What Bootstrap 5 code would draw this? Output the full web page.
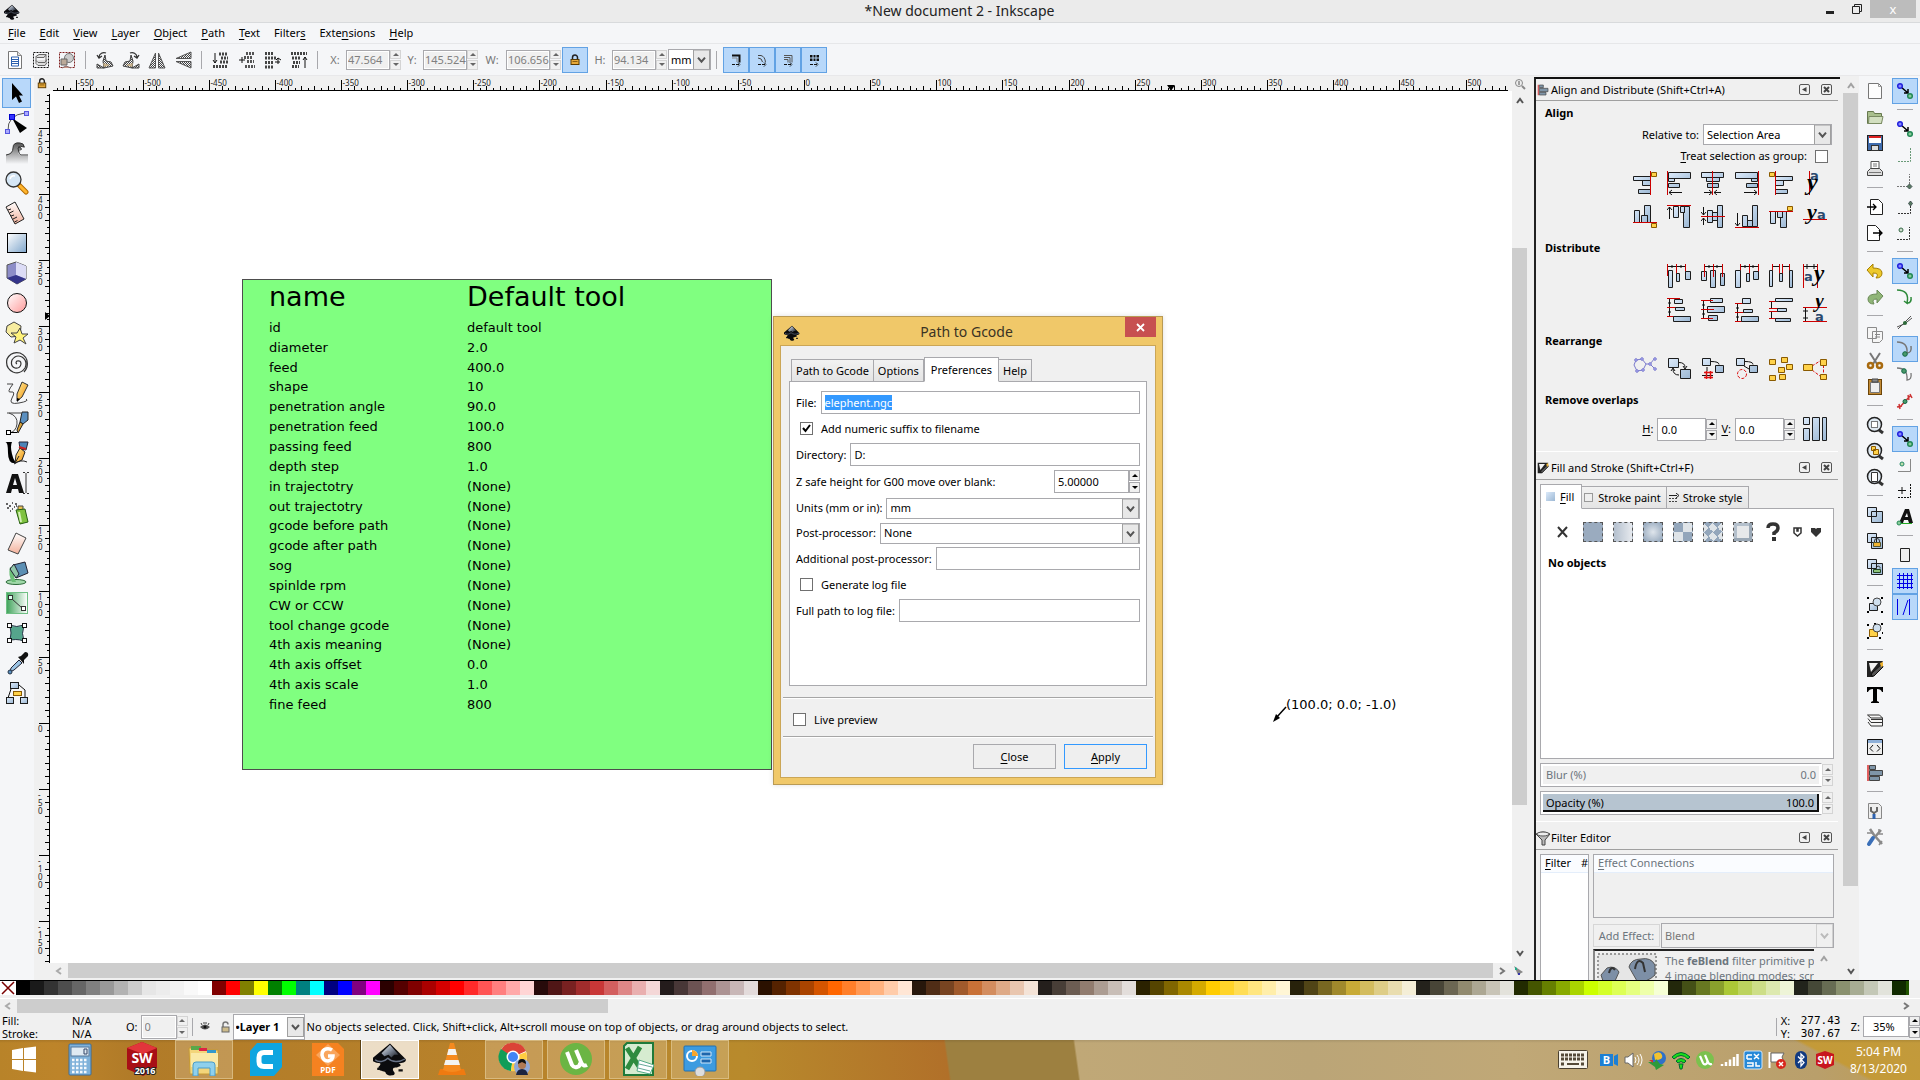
<!DOCTYPE html>
<html lang="en">
<head>
<meta charset="utf-8">
<meta name="viewport" content="width=device-width, initial-scale=1">
<title>*New document 2 - Inkscape</title>
<link href="https://cdn.jsdelivr.net/npm/bootstrap@5.3.0/dist/css/bootstrap.min.css" rel="stylesheet">
<style>
:root{--chrome:#f0f0f0;--bar:#f5f6f8;--edge:#a9a9ad;--thumb:#cdcdcd;--hot:#b8d8fa;--hotedge:#62a2e4}
body{font:11px/16px "Noto Sans","Open Sans",sans-serif;color:#000;background:var(--chrome);overflow:hidden}
body>*{flex-shrink:0}
button,input,select{font:inherit;color:inherit}
button{background:none;border:0;padding:0}
svg{display:block;flex:none}
u{text-underline-offset:2px}
.i24{width:24px;height:24px}
.i16{width:16px;height:16px}
.titlebar{height:23px;background:#ebebeb;border-bottom:1px solid #d8dadc;font-size:14px;line-height:22px;color:#222}
.titlebar .doctitle{padding-left:81px}
.winbtn{width:26px;height:18px}
.winclose{width:46px;height:18px;background:#bcbcbc;color:#fff;font-size:13px;line-height:17px}
.menus{height:21px;background:var(--bar);border-bottom:1px solid #e6e7e9;gap:14px}
.menus a{color:#000;text-decoration:none}
.cmds{height:32px;background:var(--bar);border-bottom:1px solid #e8e8ea;color:#777;padding-left:2px}
.ico{width:26px;height:26px;display:flex;align-items:center;justify-content:center;flex:none}
.hot{background:var(--hot);border:1px solid var(--hotedge)}
.vsep{width:1px;height:18px;background:#a8a8ac;margin:0 6px 0 5px}
.hsep{height:1px;width:16px;background:#a8a8ac;margin:5px auto 6px}
.fld{height:20px;border:1px solid var(--edge);background:#fff;padding:0 3px;border-radius:0;min-width:0;outline:0}
.fld:disabled{background:#f0f0f0;color:#808080;box-shadow:inset 0 0 0 1px #fff}
.spin{width:11px;display:flex;flex-direction:column;gap:1px}
.spin button{flex:1;border:1px solid #a9a9ad;display:flex;align-items:center;justify-content:center;background:#f0f0f0}
.spin button::after{content:"";border:3px solid transparent;border-top:0;border-bottom:3px solid #000}
.spin button:last-child::after{border-bottom:0;border-top:3px solid #000}
.spin.off button{border-color:#d4d4d4}
.spin.off button::after{border-bottom-color:#666}
.spin.off button:last-child::after{border-top-color:#666}
.combo{appearance:none;border:1px solid var(--edge);border-radius:0;padding:0 18px 0 3px;height:21px;outline:0;
 background:#fff url("data:image/svg+xml,%3Csvg xmlns='http://www.w3.org/2000/svg' width='17' height='20'%3E%3Crect x='.5' y='.5' width='16' height='19' fill='%23e8e8e8' stroke='%23a0a0a0'/%3E%3Cpath d='M5 8l3.500 4L12 8' fill='none' stroke='%23555' stroke-width='2'/%3E%3C/svg%3E") right center no-repeat}
.combo:disabled{color:#777;opacity:1;background-color:#f0f0f0;
 background-image:url("data:image/svg+xml,%3Csvg xmlns='http://www.w3.org/2000/svg' width='17' height='24'%3E%3Crect x='.5' y='.5' width='16' height='23' fill='%23f0f0f0' stroke='%23d0d0d0'/%3E%3Cpath d='M5 10l3.500 4L12 10' fill='none' stroke='%23bbb' stroke-width='2'/%3E%3C/svg%3E")}
.tick{appearance:none;width:13px;height:13px;margin:0;border:1px solid #707070;background:#fff;flex:none}
.tick:checked{background:#fff url("data:image/svg+xml,%3Csvg xmlns='http://www.w3.org/2000/svg' width='11' height='11'%3E%3Cpath d='M2 5l2.500 3L9 2' fill='none' stroke='%23000' stroke-width='2'/%3E%3C/svg%3E")}
.coords label{width:22px;text-align:center}
.coords .wlab{width:28px}
.coords .hlab{width:24px}
.coords .fld{width:44px;padding:0 0 0 1px}
.coords .spin{height:20px}
.coords .ico{margin-left:1px}
.coords .combo{width:43px;margin-left:1px;padding:0 17px 0 2px}
.tools{width:34px;background:var(--bar);padding:2px 3px 0 2px}
.tools .ico{width:29px;height:30px}
.rulerh{height:15px}
.rulerv{width:16px}
.rulerh svg,.rulerv svg{width:100%;height:100%}
.rulerh text,.rulerv text{font-size:8px;fill:#222}
.page-area{background:#fff;overflow:hidden}
.vbar{width:15px}
.hbar{height:15px}
.sidegap{margin-right:3px}
.thumb{background:var(--thumb)}
.toolcard{position:absolute;left:192px;top:188px;width:530px;height:491px;background:#80ff80;border:1px solid #4d4d4d;padding:0 26px;font:13px/18px "DejaVu Sans",sans-serif}
.toolcard table{width:100%;height:397px;color:#000}
.toolcard td,.toolcard th{padding:0;font-weight:400;vertical-align:middle}
.toolcard th{width:198px}
.cardhead{font-size:27px;line-height:34px;height:38px}
.cardhead span:first-child{width:198px}
.arrowmark{position:absolute;left:1222px;top:611px}
.orig{position:absolute;left:1236px;top:605px;font:13px/18px "DejaVu Sans",sans-serif}
.dialogwin{position:absolute;left:723px;top:225px;width:390px;background:#f0c869;border:1px solid #b99a54;padding:0 6px 6px;box-shadow:0 0 5px #0002}
.dlgtitle{height:28px;font-size:14px;color:#3a3324}
.dlgclose{width:31px;height:20px;background:#c75050}
.dlgbody{background:var(--chrome);border:1px solid #cba656;padding:11px 8px 8px}
.tabrow{display:flex;align-items:flex-end;position:relative;z-index:1;margin-bottom:-1px}
.tabrow button{height:23px;border:1px solid var(--edge);background:linear-gradient(#f2f2f2,#e4e4e4);white-space:nowrap}
.tabrow button+button{border-left:0}
.tabrow .on{height:25px;background:#fff;border-bottom-color:#fff;border-left:1px solid var(--edge)}
.dlgbody .tabrow{padding-left:2px}
.dlgbody .tabrow button{padding:0 4px}
.dlgbody .tabrow .on{padding:0 6px}
.pane{background:#fff;border:1px solid var(--edge)}
.dlgpane{height:305px;padding:9px 6px 0}
.frow{display:flex;align-items:center;gap:4px;height:23px;margin-bottom:3px;white-space:nowrap}
.frow .fld{height:23px}
.frow .zin{width:75px}
.zrow{height:25px}
.crow{height:22px}
.rule{height:2px;background:#a6a6a6;border-bottom:1px solid #fff;margin:0 -6px}
.dlgpane+.rule{margin-top:11px}
.livep{height:37px;gap:8px;padding:4px 0 0 4px}
.dlgbtns{padding-top:6px}
.pushbtn{width:83px;height:25px;border:1px solid var(--edge);background:#efefef}
.pushbtn.main{border-color:#3399ff}
::selection{background:#39f;color:#fff}
.dockcol{flex:0 0 306px;border-left:2px solid #222;border-top:2px solid #111;overflow:hidden;margin-top:1px}
.dockhead{height:22px;border-bottom:1px solid #a0a0a0;margin-right:2px}
.dockhead .i16{margin-left:-1px}
.dockhead.later{height:28px;padding-top:4px}
.dockhead button{width:22px;display:flex;justify-content:center}
.dsec{border-bottom:1px solid #fff;margin-right:2px}
.dsec h6{font-size:11px;line-height:18px;margin:0;font-weight:700}
.igrid{display:grid;grid-template-columns:repeat(6,24px);gap:10px;justify-content:end;padding-right:5px}
.alignsec{padding:3px 6px 0 9px;height:351px}
.selrow{height:21px;margin-top:2px}
.selrow select{width:129px}
.treat{height:22px;padding-right:4px;margin-bottom:4px}
.alignsec .igrid+h6{padding:10px 0 7px}
.ovrow{padding-right:5px;margin-top:1px}
.ovrow .fld{width:49px;height:23px}
.ovrow .spin{height:21px}
.ovrow label{padding:0 4px}
.fillsec{padding:4px 4px 0 4px;height:342px}
.fillsec .tabrow button{padding:0 5px 0 2px}
.fillsec .tabrow .on{padding:0 7px 0 5px}
.fillpane{height:251px;position:relative;padding:13px 7px;margin-bottom:4px}
.fillpane h6{padding-top:12px}
.paints{gap:10px;padding-left:5px}
.paint{width:20px;height:20px;border:1px dashed #555}
.hearts{position:absolute;right:10px;top:17px}
.srow{height:24px;margin-bottom:4px}
.srow .spin{height:22px;margin:1px 1px 0 0}
.slider-f{flex:1;height:24px;border:1px solid var(--edge);border-right-color:#fff;padding:2px;background:#fff}
.slider-f>div{flex:1;padding:0 3px;line-height:17px}
.opac{background:#b6c4d0;border-right:2px solid #111;border-bottom:2px solid #111}
.blurry{background:#f0f0f0}
.listhd{height:18px;background:#fafcff;border-bottom:1px solid #e4eefb;white-space:nowrap}
.filt{padding:4px 4px 0 4px;gap:4px}
.flist{width:49px;height:200px}
.fright{width:241px}
.efx{height:64px;background:#f0f0f0}
.addrow{margin:5px 0 1px;height:25px;gap:1px}
.addrow button{border:1px solid #d6d6d6;width:67px;height:23px}
.addrow .combo{height:25px}
.desc{border-top:2px solid #222;border-left:2px solid #888;width:222px;overflow:hidden;padding:2px;line-height:15px}
.dockbar{margin:0 1px 0 3px}
.dockbar svg:first-child{margin:4px 0 1px}
.dockbar svg:last-child{margin-bottom:3px}
.sidebars{background:var(--bar)}
.cmdcol{width:31px;padding-top:2px}
.snapcol{width:30px;padding-top:2px}
.cmdcol .ico,.snapcol .ico{margin:0 auto}
.swatches{height:15px;border-top:1px solid #000;overflow:hidden;max-width:1909px}
.swatches>*{height:14px;width:14px;flex:none;padding:0}
.swatches>:first-child{width:16px;background:#fff}
.palbar{margin-top:3px;border-top:1px solid #fff}
.palbar svg:first-child{margin:0 3px 0 2px}
.palbar .thumb{width:591px;height:14px}
.status{height:27px;white-space:nowrap}
.twoline{line-height:13px}
.fs{width:70px;padding-left:2px}
.na{width:56px;padding-left:2px}
.opin{width:36px;height:24px;margin-left:3px}
.status .spin{height:22px}
.lk{margin-left:4px}
.layersel{width:72px;height:26px;padding-left:2px}
.msg{padding-left:2px}
.xy{width:20px}
.num{width:50px;font-family:"DejaVu Sans Mono","Liberation Mono",monospace}
.zmin{width:46px;height:21px;margin-left:3px;padding-left:9px}
.taskbar{height:40px;background:linear-gradient(#0000001a,#0000 3px),linear-gradient(28deg,#0000 62%,#c49a38 64%,#c29a3c) right/260px 100% no-repeat,linear-gradient(82deg,#b88329 0,#bd842a 60px,#b17b28 130px,#b8822b 500px,#b88a2c 740px,#b17029 940px,#9d8040 942px,#9d8040 1068px,#c0a877 1070px,#bba577 1300px,#c0a877 1500px,#b99f6b 1800px,#bf9c4f)}
.startbtn{width:49px}
.tk{width:62px;height:40px;display:flex;align-items:center;justify-content:center;padding-bottom:2px}
.tk>span{width:58px;height:39px;display:flex;align-items:center;justify-content:center}
.tk svg{width:34px;height:34px}
.open>span{background:#fff3;border:1px solid #e3c993aa}
.active>span{background:#fffb;border-color:#fff;box-shadow:-1px 0 #5a4012}
.tray svg{width:20px;height:20px}
.tray button{width:24px;display:flex;justify-content:center}
.tray .kb{width:36px;margin-right:6px}
.tray .kb svg{width:30px}
.clock{width:83px;color:#fff;text-align:center;line-height:17px;font-size:12px}
.ab{fill:url(#gblue);stroke:#1c1c1c}
.rl{stroke:#cc0000;fill:none}
.bl{stroke:#111;fill:none}
.yb{fill:#ffd24a;stroke:#8a5a00}
.gr{stroke:#888;fill:none}
</style>
<script src="https://cdn.jsdelivr.net/npm/bootstrap@5.3.0/dist/js/bootstrap.bundle.min.js"></script>
</head>
<body class="vh-100 d-flex flex-column">

<svg width="0" height="0" class="position-absolute" aria-hidden="true">
<defs>
<linearGradient id="gblue" x2="1" y2="1"><stop stop-color="#dceafa"/><stop offset="1" stop-color="#9cb8d4"/></linearGradient>
<linearGradient id="gwb" x2="1" y2="1"><stop stop-color="#fff"/><stop offset="1" stop-color="#7fa6cc"/></linearGradient>
<linearGradient id="gpink" x2="1" y2="1"><stop stop-color="#fff"/><stop offset="1" stop-color="#ff9a9a"/></linearGradient>
<linearGradient id="gskin" y2="1" x2="0"><stop stop-color="#fff"/><stop offset="1" stop-color="#f3b09a"/></linearGradient>
<linearGradient id="ggray" x2="0" y2="1"><stop stop-color="#555"/><stop offset="1" stop-color="#f5f6f8"/></linearGradient>
<linearGradient id="ggreen" x2="1"><stop stop-color="#3fa35a"/><stop offset="1" stop-color="#fff"/></linearGradient>
<linearGradient id="gink" x2="1" y2="1"><stop stop-color="#f4f6fb"/><stop offset=".5" stop-color="#7d8797"/><stop offset="1" stop-color="#10131a"/></linearGradient>
<linearGradient id="gor" x2="1" y2="1"><stop stop-color="#fff0a0"/><stop offset="1" stop-color="#f08a00"/></linearGradient>
<pattern id="dith" width="2" height="2" patternUnits="userSpaceOnUse"><path d="M0 0h1v1H0zM1 1h1v1H1z" fill="#444"/></pattern>

<symbol id="ink" viewBox="0 0 24 24"><path d="M12 1L23 12c1 2-2 3-5 3 2 1 2 2 0 2.500-2 1-3 0-4 1.500 0 2 2 2 1 4-1 1-5 1-6-1 0-2-4-1-5-3s2-2 1-4c-2 0-6-1-6-3z" fill="#0b0b0e"/><path d="M12 2L6 8l2 2 3-1 2 2 2-2 3 0z" fill="url(#gink)"/><path d="M1.500 12.500c3 2.500 7 1 9-1 3 3 8 3 12 .5" fill="none" stroke="#6a7488"/><path d="M3 19h2M18 20h3" stroke="#111" stroke-width="1.500"/></symbol>
<symbol id="lock" viewBox="0 0 16 16"><path d="M5.500 8V5.500a2.500 2.500 0 015 0V8" fill="none" stroke="#222" stroke-width="1.500"/><rect x="4" y="7.500" width="8" height="5" fill="#e6a93a" stroke="#5a3a00"/><path d="M5.500 9.500h5" stroke="#8a5c10"/></symbol>

<symbol id="c-doc" viewBox="0 0 24 24"><path d="M5.500 3.500h9l4 4v13h-13z" fill="#fff" stroke="#777"/><path d="M14.500 3.500v4h4" fill="#ddd" stroke="#888"/><path d="M8.500 9v9h7v-9zM8 11.500h8M8 13.500h8M8 15.500h8" fill="none" stroke="#2a5fae"/></symbol>
<symbol id="c-layers" viewBox="0 0 24 24"><rect x="4.500" y="4.500" width="15" height="15" fill="none" stroke="#111" stroke-dasharray="2 1"/><path d="M7 8.500l3-2h7l-2 3H8zM7 12.500l2 2h7l2-3M7 15.500l2 2h7l2-3M7 8.500v7M17 6.500v8" fill="#ddd" stroke="#666"/></symbol>
<symbol id="c-desel" viewBox="0 0 24 24"><rect x="4.500" y="4.500" width="15" height="15" fill="none" stroke="#802020" stroke-dasharray="2 1"/><circle cx="14" cy="10" r="4.500" fill="#ccc" stroke="#777"/><path d="M6 11h6v6H6z" fill="#ba9" stroke="#666"/><path d="M7 20l4-2 5 2" fill="#c98" stroke="#866"/></symbol>
<symbol id="c-rotl" viewBox="0 0 24 24"><path d="M4 16l7 4h-7zM11 20l9-2-2-4-5-1-1-6-2 6z" fill="url(#dith)" stroke="#444"/><path d="M13 5a5 5 0 00-7 4M4 7l2 3 3-2" fill="none" stroke="#333" stroke-width="1.300"/><path d="M10 15l7 2-6 2z" fill="#c9b28a"/></symbol>
<symbol id="c-fliph" viewBox="0 0 24 24"><path d="M10.500 5v15H4zM13.500 5v15H20z" fill="url(#dith)" stroke="#555"/></symbol>
<symbol id="c-bottom" viewBox="0 0 24 24"><path d="M6 5v10m-2-3l2 3 2-3" class="bl"/><path d="M10 6h9M12 10h7M11 14h8M4 18.500h15" stroke="#444" stroke-width="3" stroke-dasharray="2 1"/></symbol>
<symbol id="c-lower" viewBox="0 0 24 24"><path d="M11 5.500h9M9 9.500h8M12 13.500h7M10 18.500h10" stroke="#555" stroke-width="3" stroke-dasharray="2 1"/><path d="M4 12h6M7 9v6" class="bl"/></symbol>
<symbol id="c-raise" viewBox="0 0 24 24"><path d="M4 5.500h8M4 10h11M4 14.500h8M4 19h9" stroke="#444" stroke-width="3" stroke-dasharray="2 1"/><path d="M17 16v-6m-2 2l2-2 3 2M14 14h5" class="bl"/></symbol>
<symbol id="c-top" viewBox="0 0 24 24"><path d="M4 5.500h16M5 10h8M6 14.500h7M5 18.500h7" stroke="#444" stroke-width="3" stroke-dasharray="2 1"/><path d="M18 20V9m-2 3l2-3 2 3" class="bl"/></symbol>
<symbol id="c-aff1" viewBox="0 0 24 24"><path d="M8 7.500h7.500v7" fill="none" stroke="#111" stroke-width="2"/><path d="M8 10h5v4" class="gr"/><path d="M8 16.500h8m-2-2l2 2-2 2" class="bl" stroke-dasharray="3 1"/></symbol>
<symbol id="c-aff2" viewBox="0 0 24 24"><path d="M8 7.500h3q4 1 4.500 7M8 10q4 0 4.500 4" fill="none" stroke="#444"/><path d="M8 16.500h8m-2-2l2 2-2 2" class="bl" stroke-dasharray="3 1"/></symbol>
<symbol id="c-aff3" viewBox="0 0 24 24"><path d="M8 7.500h8v7M8 9.500h6v5M8 11.500h4v3" fill="none" stroke="#555"/><path d="M8 16.500h8m-2-2l2 2-2 2" class="bl" stroke-dasharray="3 1"/></symbol>
<symbol id="c-aff4" viewBox="0 0 24 24"><rect x="8" y="7" width="9" height="6" fill="#111"/><path d="M8 10h9M11 7v6M14 7v6" stroke="#b8d8fa"/><path d="M8 16.500h8m-2-2l2 2-2 2" class="bl" stroke-dasharray="3 1"/></symbol>

<symbol id="t-sel" viewBox="0 0 24 24"><path d="M7 2v17l4-3.500 3 6.500 3-1.500-3-6h4z" fill="#000"/></symbol>
<symbol id="t-node" viewBox="0 0 24 24"><path d="M3 20Q2 4 20 2" fill="none" stroke="#555"/><path d="M7 7l15 10-7 5z" fill="#000"/><rect x="4.500" y="3.500" width="5" height="5" fill="#33f" stroke="#00c"/><rect x="19.500" y=".5" width="4" height="4" fill="#aaf" stroke="#55d"/><rect x=".5" y="18.500" width="4" height="4" fill="#aaf" stroke="#55d"/></symbol>
<symbol id="t-tweak" viewBox="0 0 24 24"><path d="M1 14q7-1 7-7t7-5q5 1 5 5-3-3-5-1 3 2 0 4-4 2 1 5h7v8H1z" fill="url(#ggray)"/><path d="M1 14q7-1 7-7t7-5q4 0 4 4-4-2-6 1 1 7 3 7h7M13 6q4 0 3 3" fill="none" stroke="#333"/></symbol>
<symbol id="t-zoom" viewBox="0 0 24 24"><path d="M14 14l7 7" stroke="#b36b00" stroke-width="5" stroke-linecap="round"/><path d="M15 15l6 6" stroke="#ffb52e" stroke-width="3" stroke-linecap="round"/><circle cx="8.500" cy="8.500" r="7.500" fill="#d5e6f5" stroke="#333" stroke-width="1.300"/><path d="M5 8q1-4 5-3" stroke="#fff" stroke-width="1.500" fill="none"/></symbol>
<symbol id="t-meas" viewBox="0 0 24 24"><path d="M1 6l9-5 9 17-9 5z" fill="url(#gskin)" stroke="#222"/><path d="M3 9l3-1M4.500 12l4-2M6 15l3-1M8 18l4-2M9.500 21l3-1.500" stroke="#222"/></symbol>
<symbol id="t-rect" viewBox="0 0 24 24"><rect x="2.500" y="2.500" width="19" height="19" fill="url(#gwb)" stroke="#000"/></symbol>
<symbol id="t-box" viewBox="0 0 24 24"><path d="M11 1l10 4v13l-9 5-10-6V4z" fill="#8d8dc8" stroke="#555"/><path d="M11 1l10 4v13l-10-4z" fill="#dcdcf6"/><path d="M2 17l9-3 10 4-9 5z" fill="#34348a"/></symbol>
<symbol id="t-ell" viewBox="0 0 24 24"><circle cx="12" cy="12" r="9.500" fill="url(#gpink)" stroke="#111"/></symbol>
<symbol id="t-star" viewBox="0 0 24 24"><path d="M2 5l7-4 7 4-1 10-9 1-5-5z" fill="#f7eca0" stroke="#444"/><path d="M15 7l2 6h6l-5 4 3 6-6-4-6 3 2-6-5-4h6z" fill="#fff27a" stroke="#444"/></symbol>
<symbol id="t-spiral" viewBox="0 0 24 24"><path d="M12 13q-2-1 0-3 4-1 4 3-1 5-6 4-5-2-3-8 4-6 10-3 6 4 3 11-5 7-12 4Q0 17 2 8q4-8 13-6 9 4 7 14-1 3-3 5" fill="none" stroke="#333" stroke-width="1.200"/></symbol>
<symbol id="t-pencil" viewBox="0 0 24 24"><path d="M2 3h6q-7 9-2 8t1 6 7 5 7-4" fill="none" stroke="#444"/><path d="M12 20V13L17 1l6 3-6 12z" fill="url(#gor)" stroke="#333"/><path d="M12 21l0-4 3 1z" fill="#000"/></symbol>
<symbol id="t-pen" viewBox="0 0 24 24"><path d="M2 2h14M4 2q9 3 8 11t-8 9" fill="none" stroke="#444"/><path d="M17 1h6v8l-5 4-3-2z" fill="#5a8fc0" stroke="#222"/><path d="M15 11l3 2-5 9-1-3z" fill="#d6a13a" stroke="#222"/><rect x="1.500" y="19.500" width="4" height="4" fill="#fff" stroke="#000"/><path d="M6 21.500h6" stroke="#000"/></symbol>
<symbol id="t-call" viewBox="0 0 24 24"><path d="M0 1h7q-2 4 0 12t5 9q-9 2-9-10T0 1z" fill="#000"/><path d="M14 1l9 0-2 8-6-1z" fill="#4c84b8" stroke="#223"/><path d="M15 7l5 4-3 8-7 3 1-8z" fill="url(#gor)" stroke="#222"/><path d="M10 22l4-7M9 23q7-5 13-2" fill="none" stroke="#222"/><path d="M14 6l7 2" stroke="#c22" stroke-width="2"/></symbol>
<symbol id="t-text" viewBox="0 0 24 24"><path d="M1 22L7 3h6l6 19h-5l-1-4H7l-1 4zM8 14h4l-2-7z" fill="#111" fill-rule="evenodd"/><path d="M18 1.500h2m2 0h2M21 2v20M18 22.500h2m2 0h2" stroke="#333"/></symbol>
<symbol id="t-spray" viewBox="0 0 24 24"><path d="M1 3h2m1 2h2M7 2h1m2 1h2M2 7h2m3 1h1m3-3h1M9 6h1M5 10h1" stroke="#333" stroke-width="1.500"/><path d="M13 5h5v5h-5z" fill="#e8c050" stroke="#444"/><path d="M11 9l9-1 3 13-8 2z" fill="#7fc241" stroke="#255d10"/><path d="M14 11l2 10" stroke="#d6f2b8" stroke-width="2"/></symbol>
<symbol id="t-eras" viewBox="0 0 24 24"><path d="M11 2l10 5-8 16-10-4z" fill="url(#gskin)" stroke="#444"/></symbol>
<symbol id="t-bucket" viewBox="0 0 24 24"><ellipse cx="11" cy="21" rx="10" ry="2.500" fill="#9fd8a8" stroke="#2c6a3a"/><path d="M5 6q-2 8 2 15h4q-4-8 0-12z" fill="#6cbf78"/><path d="M8 4l12-3 3 11-12 5z" fill="#5c8fb4" stroke="#223"/><path d="M5 8l4-5 5 10-3 4z" fill="#8fc5a8" stroke="#223"/></symbol>
<symbol id="t-grad" viewBox="0 0 24 24"><rect x="1.500" y="1.500" width="21" height="21" fill="url(#ggreen)" stroke="#6fbf84"/><path d="M7 8l10 9" stroke="#333"/><rect x="3.500" y="4.500" width="4" height="4" fill="#dfe" stroke="#333"/><rect x="16.500" y="15.500" width="4" height="4" fill="#fff" stroke="#333"/></symbol>
<symbol id="t-mesh" viewBox="0 0 24 24"><path d="M4 4q8 3 15 0-3 9 0 16-9-3-15 0 4-8 0-16z" fill="#55a58c" stroke="#234"/><g fill="#fff" stroke="#111"><rect x="2.500" y="2.500" width="4" height="4"/><rect x="17.500" y="2.500" width="4" height="4"/><rect x="2.500" y="17.500" width="4" height="4"/><rect x="17.500" y="17.500" width="4" height="4"/></g></symbol>
<symbol id="t-drop" viewBox="0 0 24 24"><path d="M14 9L6 17l-1 4 4-2 8-7z" fill="#9cc4e4" stroke="#223"/><path d="M13 6l3-1 4-4q4 0 3 4l-4 4 0 4z" fill="#111"/><circle cx="5" cy="21" r="2" fill="#5a8fc0" stroke="#234"/></symbol>
<symbol id="t-conn" viewBox="0 0 24 24"><path d="M6 8L3 17M14 4l6 5v8" class="bl"/><rect x="5.500" y="1.500" width="8" height="6" class="ab"/><rect x="8.500" y="10.500" width="8" height="4" class="yb"/><rect x="1.500" y="16.500" width="7" height="6" class="ab"/><rect x="15.500" y="16.500" width="7" height="6" class="ab"/></symbol>

<symbol id="a1" viewBox="0 0 24 24"><path class="ab" d="M.5 5.500h17v4H.5zM9.500 9.500h8v5h-8zM5.500 18.500h12v4h-12z"/><path class="rl" d="M17.500 0v24"/><path class="yb" d="M18.500 1.500h5v4h-5z"/></symbol>
<symbol id="a2" viewBox="0 0 24 24"><path class="ab" d="M1.500 1.500h22v6h-22zM1.500 7.500h6v3h-6zM1.500 12.500h11v4h-11z"/><path class="rl" d="M.5 0v24"/><path class="bl" d="M2 21.500h13M5 19l-3 2.500 3 2.500"/></symbol>
<symbol id="a3" viewBox="0 0 24 24"><path class="ab" d="M.5 1.500h22v5H.5zM5.500 6.500h13v4h-13zM6.500 12.500h11v4h-11z"/><path class="bl" d="M3 21.500h7M8 19l3 2.500-3 2.500M20 21.500h-7M16 19l-3 2.500 3 2.500"/><path class="rl" d="M11.500 0v24"/></symbol>
<symbol id="a4" viewBox="0 0 24 24"><path class="ab" d="M.5 1.500h22v6H.5zM16.500 7.500h6v3h-6zM11.500 12.500h11v4h-11z"/><path class="rl" d="M23.500 0v24"/><path class="bl" d="M9 21.500h13M19 19l3 2.500-3 2.500"/></symbol>
<symbol id="a5" viewBox="0 0 24 24"><path class="ab" d="M6.500 5.500h17v4h-17zM6.500 9.500h8v5h-8zM6.500 18.500h12v4h-12z"/><path class="rl" d="M6.500 0v24"/><path class="yb" d="M.5 1.500h5v4h-5z"/></symbol>
<symbol id="a6" viewBox="0 0 24 24"><path class="rl" d="M6.500 0v24"/><text x="7" y="9" font-family="DejaVu Sans" font-weight="700" font-size="13" fill="#2b4a6f">a</text><text x="4" y="19" font-family="Liberation Serif" font-weight="700" font-style="italic" font-size="24">y</text></symbol>
<symbol id="a7" viewBox="0 0 24 24"><path class="ab" d="M1.500 5.500h5v12h-5zM8.500 10.500h6v7h-6zM11.500 .5h6v17h-3v-7h-3z"/><path class="rl" d="M0 17.500h24"/><path class="yb" d="M18.500 18.500h5v4h-5z"/></symbol>
<symbol id="a8" viewBox="0 0 24 24"><path class="ab" d="M6.500 1.500h5v11h-5zM13.500 1.500h4v6h-4zM17.500 1.500h5v21h-6v-15h1z"/><path class="bl" d="M2.500 14V2M0 5l2.500-3L5 5"/><path class="rl" d="M0 .5h24"/></symbol>
<symbol id="a9" viewBox="0 0 24 24"><path class="ab" d="M6.500 5.500h5v12h-5zM11.500 7.500h5v8h-5zM16.500 .5h5v22h-5z"/><path class="bl" d="M2.500 2v8M0 7l2.500 3L5 7M2.500 20v-7M0 16l2.500-3L5 16"/><path class="rl" d="M0 11.500h24"/></symbol>
<symbol id="a10" viewBox="0 0 24 24"><path class="ab" d="M7.500 10.500h5v11h-5zM12.500 15.500h5v6h-5zM17.500 .5h5v21h-5z"/><path class="bl" d="M2.500 8v13M0 18l2.500 3L5 18"/><path class="rl" d="M0 22.500h24"/></symbol>
<symbol id="a11" viewBox="0 0 24 24"><path class="ab" d="M1.500 6.500h5v12h-5zM8.500 6.500h5v6h-5zM11.500 12.500v10h6v-16h-4v6z"/><path class="rl" d="M0 6.500h24"/><path class="yb" d="M18.500 1.500h5v4h-5z"/></symbol>
<symbol id="a12" viewBox="0 0 24 24"><path class="rl" d="M0 14.500h24"/><text x="14" y="14" font-family="DejaVu Sans" font-weight="700" font-size="13" fill="#2b4a6f">a</text><text x="4" y="14" font-family="Liberation Serif" font-weight="700" font-style="italic" font-size="22">y</text></symbol>
<symbol id="d1" viewBox="0 0 24 24"><path class="bl" d="M1 2.500h17M5 1v3M14 1v3"/><path class="rl" d="M.5 0v12M9.500 0v12M18.500 0v12"/><path class="ab" d="M1.500 6.500h4v17h-4zM9.500 9.500h3v8h-3zM18.500 7.500h5v8h-5z"/></symbol>
<symbol id="d2" viewBox="0 0 24 24"><path class="ab" d="M.5 7.500h5v9h-5zM9.500 6.500h5v17h-5zM19.500 9.500h4v12h-4z"/><path class="bl" d="M3 2.500h18M8 1v3M16 1v3"/><path class="rl" d="M3.500 0v13M12.500 0v13M21.500 0v13"/></symbol>
<symbol id="d3" viewBox="0 0 24 24"><path class="bl" d="M5 2.500h18M10 1v3M18 1v3"/><path class="rl" d="M5.500 0v12M14.500 0v12M23.500 0v12"/><path class="ab" d="M.5 6.500h5v17h-5zM11.500 9.500h3v8h-3zM18.500 7.500h5v8h-5z"/></symbol>
<symbol id="d4" viewBox="0 0 24 24"><path class="bl" d="M4 2.500h6M14 2.500h6"/><path class="rl" d="M3.500 0v10M10.500 0v12M13.500 0v12M20.500 0v10"/><path class="ab" d="M.5 6.500h3v16h-3zM10.500 9.500h3v8h-3zM20.500 6.500h3v17h-3z"/></symbol>
<symbol id="d5" viewBox="0 0 24 24"><path class="rl" d="M.5 0v24M14.500 0v24"/><path class="bl" d="M1 2.500h13M4 0v5M11 0v5"/><text x="1" y="17" font-family="DejaVu Sans" font-weight="700" font-size="13" fill="#2b4a6f">a</text><text x="11" y="17" font-family="Liberation Serif" font-weight="700" font-style="italic" font-size="23">y</text></symbol>
<symbol id="e1" viewBox="0 0 24 24"><path class="bl" d="M2.500 1v18M1 5h3M1 14h3"/><path class="rl" d="M0 .5h13M0 9.500h13M0 18.500h13"/><path class="ab" d="M7.500 1.500h8v4h-8zM8.500 9.500h9v3h-9zM6.500 18.500h17v5h-17z"/></symbol>
<symbol id="e2" viewBox="0 0 24 24"><path class="ab" d="M9.500 .5h12v4h-12zM6.500 8.500h17v6h-17zM7.500 17.500h9v5h-9z"/><path class="bl" d="M2.500 3v18M1 7h3M1 16h3"/><path class="rl" d="M0 2.500h12M0 11.500h13M0 20.500h12"/></symbol>
<symbol id="e3" viewBox="0 0 24 24"><path class="bl" d="M2.500 6v18M1 10h3M1 19h3"/><path class="rl" d="M0 5.500h12M0 14.500h12M0 23.500h12"/><path class="ab" d="M7.500 .5h8v5h-8zM8.500 11.500h9v3h-9zM6.500 18.500h17v5h-17z"/></symbol>
<symbol id="e4" viewBox="0 0 24 24"><path class="bl" d="M2.500 4v6M2.500 13v7"/><path class="rl" d="M0 3.500h10M0 10.500h12M0 13.500h12M0 20.500h10"/><path class="ab" d="M6.500 .5h17v3h-17zM8.500 10.500h9v3h-9zM6.500 20.500h15v3h-15z"/></symbol>
<symbol id="e5" viewBox="0 0 24 24"><path class="rl" d="M0 9.500h24M0 23.500h24"/><path class="bl" d="M2.500 10v13M0 13h5M0 20h5"/><text x="12" y="23" font-family="DejaVu Sans" font-weight="700" font-size="13" fill="#2b4a6f">a</text><text x="12" y="9" font-family="Liberation Serif" font-weight="700" font-style="italic" font-size="20">y</text></symbol>
<symbol id="r1" viewBox="0 0 24 24"><path d="M3 3l6-1 4 5-3 6-6 1-3-6zM13 7h4l5-6M17 7l5 5" fill="none" stroke="#7a7acc"/><g fill="#b8b8ff" stroke="#7a7acc"><circle cx="3" cy="3" r="1.300"/><circle cx="9" cy="2" r="1.300"/><circle cx="10" cy="13" r="1.300"/><circle cx="4" cy="14" r="1.300"/><circle cx="17" cy="7" r="1.300"/><circle cx="22" cy="2" r="1.300"/><circle cx="22" cy="12" r="1.300"/></g></symbol>
<symbol id="r2" viewBox="0 0 24 24"><path class="ab" d="M1.500 1.500h10v9h-10zM13.500 12.500h10v9h-10z"/><path class="bl" d="M12 5.500q6 0 6 5m-2-1.500l2 3 2-3M6 12q0 6 6 6M4 14l2-3 2 3"/></symbol>
<symbol id="r3" viewBox="0 0 24 24"><path class="ab" d="M1.500 1.500h8v7h-8zM14.500 8.500h8v7h-8z"/><path class="bl" d="M10 4.500q8 0 8 3M6 10v4M1 18.500h11"/><path d="M5.500 14v8M9.500 14v8M3 15.500h9M3 20.500h9" stroke="#d11" stroke-width="1.500"/></symbol>
<symbol id="r4" viewBox="0 0 24 24"><path class="ab" d="M1.500 1.500h8v7h-8zM14.500 8.500h8v7h-8z"/><path class="bl" d="M10 4.500q8 0 8 3M9 9l5 3"/><circle cx="7" cy="17" r="4.500" fill="none" stroke="#d11" stroke-dasharray="3 1.500"/></symbol>
<symbol id="r5" viewBox="0 0 24 24"><path class="yb" d="M.5 2.500h6v5h-6zM12.500 .5h6v5h-6zM17.500 7.500h6v5h-6zM9.500 10.500h6v5h-6zM.5 18.500h6v5h-6zM10.500 17.500h6v5h-6z"/></symbol>
<symbol id="r6" viewBox="0 0 24 24"><path d="M9 9l8-5M9 13l8 6M20.500 8v9" stroke="#d11" stroke-dasharray="3 1.500"/><path class="yb" d="M.5 7.500h9v6h-9zM17.500 2.500h6v6h-6zM17.500 17.500h6v5h-6z"/></symbol>
<symbol id="ov" viewBox="0 0 24 24"><path class="ab" d="M.5 .5h6v7h-6zM.5 11.500h6v12h-6zM9.500 .5h7v23h-7zM19.500 .5h4v23h-4z"/></symbol>

<symbol id="k-new" viewBox="0 0 24 24"><path d="M5.500 4.500h10l3 3v12h-13z" fill="#fdfdfd" stroke="#777"/><path d="M15.500 4.500v3h3" fill="none" stroke="#999"/></symbol>
<symbol id="k-open" viewBox="0 0 24 24"><path d="M4.500 18.500v-12h6l1 2h7v10z" fill="#a9bf8d" stroke="#66784e"/><path d="M6 11.500h14l-1.500 7h-13z" fill="#d2dfc0" stroke="#7a8b63"/></symbol>
<symbol id="k-save" viewBox="0 0 24 24"><rect x="4.500" y="4.500" width="15" height="15" fill="#3f6cae" stroke="#222"/><path d="M6 5h12v7H6z" fill="#fff"/><path d="M6 5h12v2H6z" fill="#d22"/><rect x="8.500" y="14.500" width="7" height="5" fill="#ddd" stroke="#333"/></symbol>
<symbol id="k-print" viewBox="0 0 24 24"><path d="M8 12V4.500h8V12" fill="#fff" stroke="#555"/><path d="M4.500 18.500v-4l3-3h9l3 3v4z" fill="#ddd" stroke="#444"/><path d="M6 15.500h12M10 7h4M10 9h4" stroke="#777"/></symbol>
<symbol id="k-imp" viewBox="0 0 24 24"><path d="M7.500 4.500h8l4 4v11h-12z" fill="#fff" stroke="#222"/><path d="M4 12h9m-3-3l3 3-3 3" stroke="#000" fill="none" stroke-width="1.300"/></symbol>
<symbol id="k-exp" viewBox="0 0 24 24"><path d="M4.500 4.500h8l4 4v11h-12z" fill="#fff" stroke="#222"/><path d="M10 12h9m-3-3l3 3-3 3" stroke="#000" fill="none" stroke-width="1.300"/></symbol>
<symbol id="k-undo" viewBox="0 0 24 24"><path d="M4 11l6-6v4q9 0 9 5t-6 5q4-5-3-5v4z" fill="#edc92c" stroke="#a78100"/></symbol>
<symbol id="k-redo" viewBox="0 0 24 24"><path d="M20 11l-6-6v4q-9 0-9 5t6 5q-3-5 3-5v4z" fill="#8fb577" stroke="#6b8a58"/></symbol>
<symbol id="k-copy" viewBox="0 0 24 24"><path d="M4.500 4.500h9v11h-9zM9.500 8.500h10v8l-3 3h-7z" fill="#f6f6f6" stroke="#8a8a8a"/><path d="M12 11.500h5M12 14h5" class="gr"/></symbol>
<symbol id="k-cut" viewBox="0 0 24 24"><path d="M7 4l7 11M17 4l-7 11" stroke="#777" stroke-width="2"/><g fill="none" stroke="#a86a10" stroke-width="2.500"><circle cx="7.500" cy="16.500" r="2.500"/><circle cx="16.500" cy="16.500" r="2.500"/></g></symbol>
<symbol id="k-paste" viewBox="0 0 24 24"><rect x="5.500" y="4.500" width="13" height="15" fill="#c18a35" stroke="#6b4408"/><path d="M7.500 7.500h9v10h-9z" fill="#eee" stroke="#777"/><path d="M9 4h6v3H9z" fill="#888" stroke="#444"/></symbol>
<symbol id="k-zsel" viewBox="0 0 24 24"><path d="M16 17l4 3" stroke="#333" stroke-width="3"/><circle cx="11.500" cy="11.500" r="7" fill="#dfe9f2" stroke="#222" stroke-width="1.500"/><path d="M8.500 8.500h6v6h-6z" fill="#fff" stroke="#000" stroke-dasharray="1 1"/></symbol>
<symbol id="k-zdraw" viewBox="0 0 24 24"><path d="M16 17l4 3" stroke="#333" stroke-width="3"/><circle cx="11.500" cy="11.500" r="7" fill="#dfe9f2" stroke="#222" stroke-width="1.500"/><path class="yb" d="M8.500 7.500h4v4h-4zM10.500 10.500h5v5h-5z"/></symbol>
<symbol id="k-zpage" viewBox="0 0 24 24"><path d="M16 17l4 3" stroke="#333" stroke-width="3"/><circle cx="11.500" cy="11.500" r="7" fill="#dfe9f2" stroke="#222" stroke-width="1.500"/><path d="M8.500 7.500h6v9h-6z" fill="#fff" stroke="#333"/></symbol>
<symbol id="k-dup" viewBox="0 0 24 24"><path class="ab" d="M4.500 4.500h9v9h-9zM8.500 8.500h11v11h-11z"/></symbol>
<symbol id="k-clone" viewBox="0 0 24 24"><path class="ab" d="M4.500 4.500h9v9h-9zM8.500 8.500h11v11h-11z"/><path d="M11.500 13v-1a2.500 2.500 0 015 0v1" fill="none" stroke="#333"/><path d="M10.500 13.500h7v4h-7z" fill="#f0b430" stroke="#553"/></symbol>
<symbol id="k-unlink" viewBox="0 0 24 24"><path class="ab" d="M4.500 4.500h9v9h-9zM8.500 8.500h11v11h-11z"/><path d="M14 11.500a2 2 0 013 1v1" fill="none" stroke="#333"/><path d="M10.500 14.500h7v3h-7z" fill="#8fc47a" stroke="#242"/></symbol>
<symbol id="k-grp" viewBox="0 0 24 24"><path d="M4 4h2v2H4zM18 4h2v2h-2zM4 18h2v2H4zM18 18h2v2h-2z"/><path class="ab" d="M6.500 10.500h8v7h-8z"/><circle cx="14" cy="9" r="4" fill="#cfdfee" stroke="#444"/></symbol>
<symbol id="k-ungrp" viewBox="0 0 24 24"><path d="M4 5h2v2H4zM11 4h2v2h-2zM18 4h2v2h-2zM4 18h2v2H4zM16 18h2v2h-2zM19 13h1v2h-1z"/><path class="yb" d="M6.500 10.500h8v7h-8z"/><circle cx="14" cy="9" r="4" fill="#cfdfee" stroke="#444"/></symbol>
<symbol id="k-fill" viewBox="0 0 24 24"><path d="M4 4h16L10 20H4z" fill="#222"/><path d="M6 6h9l-7 9z" fill="#f3f3f3"/><path d="M19 7l1 3-9 9H8l1-3z" fill="#555" stroke="#111"/><path d="M17 6l3-1v4l-2 1z" fill="#f0b430"/></symbol>
<symbol id="k-text" viewBox="0 0 24 24"><path d="M4 4h16v5h-1q-1-3-5-3v12l2 1v1H8v-1l2-1V6q-4 0-5 3H4z"/></symbol>
<symbol id="k-lay" viewBox="0 0 24 24"><path d="M4.500 6l12 0 3 3H8zM8 10.500h11.500M5 9.500l3 4h11.500M5 13l3 4h11.500v-8" fill="#f6f6f6" stroke="#333"/></symbol>
<symbol id="k-xml" viewBox="0 0 24 24"><path d="M4.500 4.500h15v15h-15z" fill="#eee" stroke="#111"/><path d="M5 5h14v3H5z" fill="#8fb0d8"/><path d="M10 10l-3 3.500 3 3M14 10l3 3.500-3 3" class="bl"/></symbol>
<symbol id="k-align" viewBox="0 0 24 24"><path d="M5 4v16" stroke="#e06060" stroke-width="2"/><path fill="#7f95a8" stroke="#444" d="M6.500 4.500h6v4h-6zM6.500 9.500h13v5h-13zM6.500 15.500h10v4h-10z"/></symbol>
<symbol id="k-dprop" viewBox="0 0 24 24"><path d="M5.500 4.500h10l3 3v12h-13z" fill="#eee" stroke="#888"/><path d="M8 8v4l3 2v5M14 8v4l-3 2" stroke="#666" stroke-width="2" fill="none"/><path d="M11 15v5" stroke="#2d62b0" stroke-width="3"/></symbol>
<symbol id="k-pref" viewBox="0 0 24 24"><path d="M7 4l4 6 8 9M18 5l-6 7" stroke="#8a8a8a" stroke-width="2.500" fill="none"/><path d="M4 8h5M16 4v5h4M19 16l-3 4" stroke="#8a8a8a" stroke-width="1.500" fill="none"/><path d="M10 13l-4 6" stroke="#3a6fb8" stroke-width="4" stroke-linecap="round"/></symbol>

<symbol id="s-snap" viewBox="0 0 24 24"><path d="M8 8l7 6m0-4v4h-4" stroke="#000" stroke-width="1.500" fill="none"/><circle cx="7" cy="7" r="2.300" fill="#88f" stroke="#22d" stroke-width="1.500"/><circle cx="17" cy="17" r="2.300" fill="#8c9" stroke="#285" stroke-width="1.500"/></symbol>
<symbol id="s-bb" viewBox="0 0 24 24"><path d="M5 18.500h12.500V5" fill="none" stroke="#6a9a78" stroke-dasharray="2 1"/></symbol>
<symbol id="s-bbc" viewBox="0 0 24 24"><path d="M4 17.500h12.500V5" fill="none" stroke="#777" stroke-dasharray="2 1"/><path d="M16.500 15l2.500 2.500-2.500 2.500-2.500-2.500z" fill="#587a60" stroke="#455"/></symbol>
<symbol id="s-bbm" viewBox="0 0 24 24"><path d="M5 18.500h12.500V6" fill="none" stroke="#333" stroke-dasharray="2 1"/><path d="M17.500 6l2 2.500-2 2.500-2-2.500z" fill="#587a60" stroke="#455"/></symbol>
<symbol id="s-bbx" viewBox="0 0 24 24"><path d="M4 18.500h12.500V6" fill="none" stroke="#333" stroke-dasharray="2 1"/><circle cx="8" cy="9" r="2" fill="#cdc" stroke="#364"/></symbol>
<symbol id="s-path" viewBox="0 0 24 24"><path d="M4 5q13 0 10 13q5 0 4-6M11 16l4 3" fill="none" stroke="#2d8a3a" stroke-width="1.500"/></symbol>
<symbol id="s-int" viewBox="0 0 24 24"><path d="M4 16q8-2 15-9M5 18L18 5" fill="none" stroke="#555"/><circle cx="12" cy="12" r="2" fill="#2d6a3a"/></symbol>
<symbol id="s-cusp" viewBox="0 0 24 24"><path d="M4 5q11 0 10 11q5 0 4-7" fill="none" stroke="#777" stroke-width="1.500"/><circle cx="12" cy="17" r="2.300" fill="#4a9a6a" stroke="#164"/></symbol>
<symbol id="s-smooth" viewBox="0 0 24 24"><path d="M4 5q11 0 10 12q5 0 4-7" fill="none" stroke="#777" stroke-width="1.300"/><circle cx="11" cy="8" r="2.300" fill="#4a9a6a" stroke="#164"/></symbol>
<symbol id="s-mid" viewBox="0 0 24 24"><path d="M6 19L18 6M4 18l5-1M6 15l1 5M15 6l1 5M17 5l2 4" stroke="#c33" stroke-width="1.500"/><circle cx="12" cy="12.500" r="2" fill="#4a9a6a" stroke="#164"/></symbol>
<symbol id="s-ctr" viewBox="0 0 24 24"><path d="M5 18.500h12.500V6" class="gr"/><circle cx="9" cy="11" r="2" fill="#bda" stroke="#286"/></symbol>
<symbol id="s-rot" viewBox="0 0 24 24"><path d="M5 18.500h12.500V5" class="bl" stroke-dasharray="2 1"/><path d="M5 11.500h8M9 8v7" class="bl"/></symbol>
<symbol id="s-txt" viewBox="0 0 24 24"><path d="M6 18L12 4h4l4 14h-4l-1-3h-4l-1 3zM12 12h3l-1-4z" fill="#111" fill-rule="evenodd"/><path d="M5 18.500h14" stroke="#2a2"/><circle cx="6" cy="18" r="2" fill="#8c9" stroke="#285"/></symbol>
<symbol id="s-page" viewBox="0 0 24 24"><path d="M7.500 5.500h9v13h-9z" fill="#eee" stroke="#222"/></symbol>
<symbol id="s-grid" viewBox="0 0 24 24"><path d="M6.500 4v16M10.500 4v16M14.500 4v16M18.500 4v16M4 6.500h16M4 10.500h16M4 14.500h16M4 18.500h16" stroke="#0000e6"/></symbol>
<symbol id="s-guide" viewBox="0 0 24 24"><path d="M4.500 4v16M10 20l5-15M16.500 4v16" stroke="#0000e6"/></symbol>

<symbol id="up" viewBox="0 0 12 12"><path d="M3 8l3-4 3 4" fill="none" stroke="#555" stroke-width="2"/></symbol>
<symbol id="dn" viewBox="0 0 12 12"><path d="M3 4l3 4 3-4" fill="none" stroke="#555" stroke-width="2"/></symbol>
<symbol id="lf" viewBox="0 0 12 12"><path d="M8 3L4 6l4 3" fill="none" stroke="#aaa" stroke-width="2"/></symbol>
<symbol id="rt" viewBox="0 0 12 12"><path d="M4 3l4 3-4 3" fill="none" stroke="#777" stroke-width="2"/></symbol>
<symbol id="pin" viewBox="0 0 12 12"><rect x=".5" y=".5" width="10" height="10" rx="1.500" fill="none" stroke="#555"/><path d="M7.500 3v5L3 5.500z" fill="#444"/></symbol>
<symbol id="xbox" viewBox="0 0 12 12"><rect x=".5" y=".5" width="10" height="10" rx="1.500" fill="none" stroke="#555"/><path d="M3 3l5 5M8 3L3 8" stroke="#444" stroke-width="2"/></symbol>
</defs></svg>

<header class="titlebar d-flex align-items-start">
  <svg class="ms-1 mt-1 i16"><use href="#ink"/></svg>
  <div class="flex-grow-1 text-center doctitle">*New document 2 - Inkscape</div>
  <button class="winbtn" aria-label="Minimize"><svg width="26" height="18"><path d="M8 12.500h8" stroke="#222" stroke-width="3"/></svg></button>
  <button class="winbtn" aria-label="Restore"><svg width="26" height="18"><path d="M8.500 6.500h7v7h-7zM10.500 6V4.500h7v7H16" fill="none" stroke="#222"/></svg></button>
  <button class="winclose me-1" aria-label="Close window">x</button>
</header>

<nav class="menus d-flex align-items-center px-2">
  <a href="#"><u>F</u>ile</a><a href="#"><u>E</u>dit</a><a href="#"><u>V</u>iew</a><a href="#"><u>L</u>ayer</a><a href="#"><u>O</u>bject</a><a href="#"><u>P</u>ath</a><a href="#"><u>T</u>ext</a><a href="#">Filter<u>s</u></a><a href="#">Exte<u>n</u>sions</a><a href="#"><u>H</u>elp</a>
</nav>

<div class="cmds d-flex align-items-center">
  <div class="d-flex align-items-center" data-icons="c-doc c-layers c-desel | c-rotl c-rotl~ c-fliph c-fliph^ | c-bottom c-lower c-raise c-top |"></div>
  <div class="d-flex align-items-center coords">
    <label for="fx">X:</label><input id="fx" class="fld" value="47.564" disabled><span class="spin off"><button aria-label="up"></button><button aria-label="down"></button></span>
    <label for="fy">Y:</label><input id="fy" class="fld" value="145.524" disabled><span class="spin off"><button aria-label="up"></button><button aria-label="down"></button></span>
    <label for="fw" class="wlab">W:</label><input id="fw" class="fld" value="106.656" disabled><span class="spin off"><button aria-label="up"></button><button aria-label="down"></button></span>
    <button class="ico hot" aria-label="Lock ratio"><svg class="i16"><use href="#lock"/></svg></button>
    <label for="fh" class="hlab">H:</label><input id="fh" class="fld" value="94.134" disabled><span class="spin off"><button aria-label="up"></button><button aria-label="down"></button></span>
    <select class="combo text-black" aria-label="Units"><option>mm</option></select>
  </div>
  <i class="vsep"></i>
  <div class="d-flex" data-icons="c-aff1! c-aff2! c-aff3! c-aff4!"></div>
</div>

<main class="d-flex flex-fill" style="min-height:0;flex-basis:0">
  <div class="tools flex-shrink-0" data-icons="t-sel! t-node t-tweak t-zoom t-meas t-rect t-box t-ell t-star t-spiral t-pencil t-pen t-call t-text t-spray t-eras t-bucket t-grad t-mesh t-drop t-conn"></div>

  <section class="d-flex flex-column flex-fill" style="min-width:0">
    <div class="d-flex rulerh">
      <div class="rulerv"><svg class="i16"><use href="#lock"/></svg></div>
      <div class="flex-grow-1" id="rh"></div>
      <div class="vbar sidegap d-flex justify-content-center"><svg viewBox="0 0 15 15"><circle cx="7" cy="7" r="3.500" fill="#eee" stroke="#888"/><path d="M10 10l3 3" stroke="#888" stroke-width="2"/><path d="M7 5v4" stroke="#555"/></svg></div>
    </div>
    <div class="d-flex flex-grow-1" style="min-height:0">
      <div class="rulerv flex-shrink-0" id="rv"></div>
      <div class="page-area flex-grow-1 position-relative">
        <article class="toolcard">
          <div class="d-flex cardhead"><span>name</span><span>Default tool</span></div>
          <table id="params"></table>
        </article>
        <svg class="arrowmark" width="20" height="22"><path d="M14 5L4 16" stroke="#000" stroke-width="1.500"/><path d="M1 20l3-8 4 4z"/></svg>
        <div class="orig">(100.0; 0.0; -1.0)</div>

        <section class="dialogwin" role="dialog" aria-label="Path to Gcode">
          <div class="dlgtitle d-flex align-items-start">
            <svg class="i16 mt-2 ms-1"><use href="#ink"/></svg>
            <div class="flex-grow-1 text-center pt-1 ps-2 lh-base">Path to Gcode</div>
            <button class="dlgclose" aria-label="Close dialog"><svg width="31" height="20"><path d="M12 7l7 7M19 7l-7 7" stroke="#fff" stroke-width="1.800"/></svg></button>
          </div>
          <div class="dlgbody">
            <div class="tabrow" role="tablist"><button>Path to Gcode</button><button>Options</button><button class="on">Preferences</button><button>Help</button></div>
            <form class="pane dlgpane">
              <div class="frow"><label for="g1">File:</label><input id="g1" class="fld flex-grow-1" value="elephent.ngc"></div>
              <div class="frow ps-1"><input type="checkbox" class="tick" id="g2" checked><label for="g2" class="ps-1">Add numeric suffix to filename</label></div>
              <div class="frow"><label for="g3">Directory:</label><input id="g3" class="fld flex-grow-1" value="D:"></div>
              <div class="frow zrow"><label for="g4" class="flex-grow-1">Z safe height for G00 move over blank:</label><div class="d-flex"><input id="g4" class="fld zin" value="5.00000"><span class="spin"><button type="button" aria-label="up"></button><button type="button" aria-label="down"></button></span></div></div>
              <div class="frow crow"><label for="g5">Units (mm or in):</label><select id="g5" class="combo flex-grow-1"><option>mm</option></select></div>
              <div class="frow crow"><label for="g6">Post-processor:</label><select id="g6" class="combo flex-grow-1"><option>None</option></select></div>
              <div class="frow"><label for="g7">Additional post-processor:</label><input id="g7" class="fld flex-grow-1"></div>
              <div class="frow ps-1"><input type="checkbox" class="tick" id="g8"><label for="g8" class="ps-1">Generate log file</label></div>
              <div class="frow"><label for="g9">Full path to log file:</label><input id="g9" class="fld flex-grow-1"></div>
            </form>
            <div class="rule"></div>
            <div class="d-flex align-items-center livep"><input type="checkbox" class="tick" id="g10"><label for="g10">Live preview</label></div>
            <div class="rule"></div>
            <div class="d-flex justify-content-end gap-2 dlgbtns"><button class="pushbtn"><u>C</u>lose</button><button class="pushbtn main"><u>A</u>pply</button></div>
          </div>
        </section>
      </div>
      <div class="vbar sidegap d-flex flex-column align-items-center">
        <svg width="12" height="12" class="mt-1"><use href="#up"/></svg>
        <div style="flex:141"></div><div class="thumb w-100" style="flex:557"></div><div style="flex:142"></div>
        <svg width="12" height="12" class="mb-1"><use href="#dn"/></svg>
      </div>
    </div>
    <div class="hbar d-flex align-items-center mainscroll">
      <div class="rulerv"></div><svg width="12" height="12"><use href="#lf"/></svg><div class="thumb flex-grow-1 h-100"></div><svg width="12" height="12"><use href="#rt"/></svg>
      <svg width="12" height="12"><path d="M1 1l9 6-5 3z" fill="#888"/><path d="M2 2l2 1v2H2z" fill="#2a8"/><path d="M5 8h2v2H5z" fill="#33a"/></svg>
    </div>
  </section>

  <aside class="dockcol ms-1">
    <div class="dockhead d-flex align-items-center"><svg class="i16"><use href="#k-align"/></svg><span class="flex-grow-1">Align and Distribute (Shift+Ctrl+A)</span><button aria-label="Iconify"><svg width="12" height="12"><use href="#pin"/></svg></button><button aria-label="Close panel"><svg width="12" height="12"><use href="#xbox"/></svg></button></div>
    <div class="dsec alignsec">
      <h6>Align</h6>
      <div class="d-flex justify-content-end align-items-center gap-1 selrow"><label for="rel">Relative to:</label><select id="rel" class="combo"><option>Selection Area</option></select></div>
      <div class="d-flex justify-content-end align-items-center gap-2 treat"><label for="tg"><u>T</u>reat selection as group:</label><input type="checkbox" class="tick" id="tg"></div>
      <div class="igrid" data-plain="a1 a2 a3 a4 a5 a6 a7 a8 a9 a10 a11 a12"></div>
      <h6>Distribute</h6>
      <div class="igrid" data-plain="- d1 d2 d3 d4 d5 - e1 e2 e3 e4 e5"></div>
      <h6>Rearrange</h6>
      <div class="igrid" data-plain="r1 r2 r3 r4 r5 r6"></div>
      <h6>Remove overlaps</h6>
      <div class="d-flex align-items-center justify-content-end ovrow">
        <label for="oh"><u>H</u>:</label><input id="oh" class="fld" value="0.0"><span class="spin"><button aria-label="up"></button><button aria-label="down"></button></span>
        <label for="ovv"><u>V</u>:</label><input id="ovv" class="fld" value="0.0"><span class="spin"><button aria-label="up"></button><button aria-label="down"></button></span>
        <button class="ms-2" aria-label="Remove overlaps"><svg class="i24"><use href="#ov"/></svg></button>
      </div>
    </div>
    <div class="dockhead later d-flex align-items-center"><svg class="i16"><use href="#k-fill"/></svg><span class="flex-grow-1">Fill and Stroke (Shift+Ctrl+F)</span><button aria-label="Iconify"><svg width="12" height="12"><use href="#pin"/></svg></button><button aria-label="Close panel"><svg width="12" height="12"><use href="#xbox"/></svg></button></div>
    <div class="dsec fillsec">
      <div class="tabrow"><button class="on d-flex align-items-center gap-1"><svg width="10" height="10"><rect width="9" height="9" fill="url(#gblue)"/></svg><span><u>F</u>ill</span></button><button class="d-flex align-items-center gap-1"><svg width="10" height="10"><rect x=".5" y=".5" width="8" height="8" fill="#eee" stroke="#999"/></svg>Stroke paint</button><button class="d-flex align-items-center gap-1"><svg width="10" height="10"><path d="M0 2.500h8M0 5.500h9M0 8.500h9" stroke="#444" stroke-dasharray="2 1"/><path d="M0 2.500h8M7 0l3 2.500L7 5" stroke="#222" fill="none"/></svg>Stroke style</button></div>
      <div class="pane fillpane">
        <div class="d-flex align-items-center paints">
          <button aria-label="No paint"><svg width="20" height="20"><path d="M5 5l9 10M14 5L5 15" stroke="#333" stroke-width="2"/></svg></button>
          <button class="paint" aria-label="Flat" style="background:#9aabbf"></button>
          <button class="paint" aria-label="Linear" style="background:linear-gradient(90deg,#b4c0ce,#e6e9ee)"></button>
          <button class="paint" aria-label="Radial" style="background:radial-gradient(#dfe5ec,#93a6bb)"></button>
          <button class="paint" aria-label="Mesh" style="background:repeating-conic-gradient(#dfe4e8 0 25%,#93a6bb 0 50%)"></button>
          <button class="paint" aria-label="Pattern" style="background:repeating-conic-gradient(from 45deg,#dfe4e8 0 25%,#93a6bb 0 50%) 0 0/9px 9px"></button>
          <button class="paint" aria-label="Swatch" style="background:#e6e8ea;box-shadow:inset -3px -3px #9aa8b6,inset 3px 3px #b4c0cc"></button>
          <button aria-label="Unset"><svg width="20" height="20"><path d="M5 6q0-4 5-4t5 4q0 3-4 5v2" fill="none" stroke="#333" stroke-width="3.500"/><path d="M9 15h4v4H9z" fill="#333"/></svg></button>
        </div>
        <svg class="hearts" width="32" height="12"><path d="M3 2h3v3h1V2h3v5L6.500 10 3 7z" fill="none" stroke="#333" stroke-width="1.500"/><path d="M20 2h4l1 1 1-1h4v4l-5 5-5-5z" fill="#333"/></svg>
        <h6>No objects</h6>
      </div>
      <div class="d-flex srow text-secondary"><div class="slider-f d-flex"><div class="d-flex justify-content-between blurry"><span>Blur (%)</span><span>0.0</span></div></div><span class="spin off"><button aria-label="up"></button><button aria-label="down"></button></span></div>
      <div class="d-flex srow"><div class="slider-f d-flex"><div class="d-flex justify-content-between opac"><span>Opacity (%)</span><span>100.0</span></div></div><span class="spin off"><button aria-label="up"></button><button aria-label="down"></button></span></div>
    </div>
    <div class="dockhead later d-flex align-items-center"><svg class="i16"><path d="M1 4q7-4 14 0l-5 6v5H7v-5z" fill="#bbb" stroke="#444"/><ellipse cx="8" cy="4" rx="6" ry="2" fill="#eee" stroke="#555"/></svg><span class="flex-grow-1">Filter Editor</span><button aria-label="Iconify"><svg width="12" height="12"><use href="#pin"/></svg></button><button aria-label="Close panel"><svg width="12" height="12"><use href="#xbox"/></svg></button></div>
    <div class="d-flex filt">
      <div class="pane flist"><div class="listhd d-flex justify-content-between ps-1"><span><u>F</u>ilter</span><span>#</span></div></div>
      <div class="fright text-secondary">
        <div class="pane efx"><div class="listhd ps-1"><u>E</u>ffect Connections</div></div>
        <div class="d-flex align-items-center addrow"><button>Add Effect:</button><select class="combo flex-grow-1" aria-label="Effect" disabled><option>Blend</option></select></div>
        <div class="d-flex"><div class="desc d-flex gap-2"><svg width="60" height="30"><rect x="1" y="1" width="58" height="40" fill="#e6e6e6" stroke="#999" stroke-dasharray="2 2" stroke-width="2"/><path d="M4 22l6-7q8-3 12 4l-4 9H6zM32 14q2-8 12-8 10-2 14 6v10q-8 8-18 6z" fill="#7d8fa6" stroke="#555"/><path d="M12 20q2-8 6-3M38 16q2-12 8-6l2 9" fill="none" stroke="#333" stroke-width="2"/></svg><div class="text-nowrap">The <b>feBlend</b> filter primitive provides<br>4 image blending modes: screen,</div></div><svg width="12" height="12" class="m-1 opacity-50"><use href="#up"/></svg></div>
      </div>
    </div>
  </aside>
  <div class="vbar d-flex flex-column align-items-center dockbar flex-shrink-0">
    <svg width="12" height="12" class="opacity-50"><use href="#up"/></svg><div class="thumb w-100" style="flex:793"></div><div style="flex:79"></div><svg width="12" height="12"><use href="#dn"/></svg>
  </div>
  <div class="sidebars d-flex flex-shrink-0">
    <div class="cmdcol" data-icons="k-new k-open k-save k-print | k-imp k-exp | k-undo k-redo | k-copy k-cut k-paste | k-zsel k-zdraw k-zpage | k-dup k-clone k-unlink | k-grp k-ungrp | k-fill k-text k-lay k-xml k-align | k-dprop k-pref"></div>
    <div class="snapcol" data-icons="s-snap! | s-snap s-bb s-bbc s-bbm s-bbx | s-snap! s-path s-int s-cusp! s-smooth s-mid | s-snap! s-ctr s-rot s-txt | s-page s-grid! s-guide!"></div>
  </div>
</main>
<style>
.mainscroll{margin-bottom:2px}
.mainscroll svg{margin:0 3px}
.mainscroll svg:last-child{margin:0 5px 0 2px}
</style>

<div class="d-flex swatches" id="pal"><button aria-label="None"><svg width="16" height="14"><path d="M2 1l12 12M14 1L2 13" stroke="#7a0000" stroke-width="1.500"/></svg></button></div>
<div class="hbar d-flex align-items-center palbar"><svg width="12" height="12"><use href="#lf"/></svg><div class="thumb"></div><svg width="12" height="12" class="ms-auto me-2"><use href="#rt"/></svg></div>

<footer class="d-flex align-items-center status">
  <div class="fs twoline"><div>Fill:</div><div>Stroke:</div></div><div class="na twoline"><div>N/A</div><div>N/A</div></div>
  <label for="op">O:</label><input id="op" class="fld opin" value="0" disabled><span class="spin off"><button aria-label="up"></button><button aria-label="down"></button></span>
  <i class="vsep mx-1"></i>
  <button aria-label="Toggle visibility"><svg class="i16"><path d="M3 8q5-5 10 0-5 5-10 0z" fill="#555"/><path d="M5 6L4 4M7 5V3M9 5V3M11 6l1-2" stroke="#444"/><circle cx="8" cy="8" r="1.500" fill="#111"/></svg></button>
  <button class="lk" aria-label="Lock layer"><svg class="i16"><path d="M6 8V5.500a2.500 2.500 0 015 0" fill="none" stroke="#777" stroke-width="1.500"/><rect x="5" y="8" width="7" height="5" fill="#cdbb8b" stroke="#666"/></svg></button>
  <select class="combo fw-bold layersel" aria-label="Layer"><option>•Layer 1</option></select>
  <span class="flex-grow-1 msg">No objects selected. Click, Shift+click, Alt+scroll mouse on top of objects, or drag around objects to select.</span>
  <i class="vsep my-0 me-1 ms-0"></i>
  <div class="xy twoline"><div>X:</div><div>Y:</div></div><div class="num twoline"><div>277.43</div><div>307.67</div></div>
  <label for="zm">Z:</label><input id="zm" class="fld zmin" value="35%"><span class="spin"><button aria-label="up"></button><button aria-label="down"></button></span>
</footer>

<footer class="taskbar d-flex align-items-center">
  <button class="startbtn" aria-label="Start"><svg width="28" height="28" class="ms-2 ps-1"><path d="M0 4l11-2v11H0zM12 2l15-2v13H12zM0 14h11v11L0 23zM12 14h15v13l-15-2z" fill="#fff"/></svg></button>
  <button class="tk" aria-label="Calculator"><span><svg viewBox="0 0 34 34"><rect x="6" y="2" width="22" height="31" rx="1" fill="#7fb2da" stroke="#3a6d9a"/><rect x="8" y="5" width="18" height="9" fill="#dfeaf2" stroke="#579"/><path d="M21 7h3v5h-3z" fill="none" stroke="#346"/><path d="M9 18h16M9 22h16M9 26h16M9 30h16" stroke="#f4f8fc" stroke-width="2.500" stroke-dasharray="2.500 1.500"/></svg></span></button>
  <button class="tk"><span><svg viewBox="0 0 34 34"><path d="M17 0l15 6v20l-14 8L2 27V6z" fill="#a80f16"/><path d="M17 0l15 6-14 6L2 6z" fill="#e2353b"/><text x="17" y="21" text-anchor="middle" font-family="Open Sans" font-weight="700" font-size="14" fill="#fff">SW</text><text x="20" y="32" text-anchor="middle" font-family="Open Sans" font-weight="700" font-size="9" fill="#fff" stroke="#222" stroke-width="2" paint-order="stroke">2016</text></svg></span></button>
  <button class="tk open" aria-label="Explorer"><span><svg viewBox="0 0 34 34"><path d="M2 6h10l2 2h17v24H3z" fill="#f3d57a" stroke="#c69a35"/><path d="M4 4h10v4H4z" fill="#5aa84a"/><path d="M12 6h8v3h-8z" fill="#d24"/><path d="M20 8h9v3h-9z" fill="#39c"/><path d="M4 11h27v14H4z" fill="#fae9a6"/><path d="M6 34V23q0-3 3-3h16q3 0 3 3v11h-5v-8H11v8z" fill="#8fd0ec" stroke="#4a9cc8"/></svg></span></button>
  <button class="tk" aria-label="Cura"><span><svg viewBox="0 0 34 34"><path d="M8 1h25v24l-8 9H1V9z" fill="#0ea5e0"/><path d="M24 10.500H15q-5 0-5 5v4q0 5 5 5h9" fill="none" stroke="#fff" stroke-width="5"/></svg></span></button>
  <button class="tk"><span><svg viewBox="0 0 34 34"><path d="M1 1h26l6 6v27H1z" fill="#f58220"/><path d="M17 2l12 11-12 11L5 13z" fill="#f9a55c"/><path d="M21 8q-3-2-6-1-4 1-4 6 1 6 6 6 5-1 5-5h-5" fill="none" stroke="#fff" stroke-width="3.500"/><text x="17" y="31" text-anchor="middle" font-family="Open Sans" font-weight="700" font-size="8" fill="#fff">PDF</text></svg></span></button>
  <button class="tk open active" aria-label="Inkscape"><span><svg><use href="#ink"/></svg></span></button>
  <button class="tk" aria-label="VLC"><span><svg viewBox="0 0 34 34"><path d="M5 27h24l2 6H3z" fill="#f07a10"/><path d="M15 1h4l7 27q-9 4-18 0z" fill="#f58a1f"/><path d="M13.500 7h7l1.500 6H12zM10.500 18h13l1.500 5H9z" fill="#f3f3f3"/></svg></span></button>
  <button class="tk open" aria-label="Chrome"><span><svg viewBox="0 0 34 34"><circle cx="16" cy="15" r="14" fill="#fff"/><path d="M16 15L4 8a14 14 0 0125 1z" fill="#db4437"/><path d="M16 15L4 7a14 14 0 0010 22z" fill="#0f9d58"/><path d="M16 15l13-5a14 14 0 01-15 19z" fill="#ffcd40"/><circle cx="16" cy="15" r="6.500" fill="#fff"/><circle cx="16" cy="15" r="5" fill="#4285f4"/><circle cx="25" cy="25" r="8" fill="#8fa8d8"/><path d="M19 33q1-6 6-6t6 6z" fill="#1b2440"/><circle cx="25" cy="23" r="4" fill="#b07a55"/><path d="M21 22q0-5 4-5t4 5l-4-2z" fill="#111"/></svg></span></button>
  <button class="tk open" aria-label="uTorrent"><span><svg viewBox="0 0 34 34"><circle cx="17" cy="17" r="16" fill="#6bb544"/><path d="M8 10l5 13q2 3 5 2 4-1 3-5M17 8l5 12q2 5 6 3" fill="none" stroke="#fff" stroke-width="4"/></svg></span></button>
  <button class="tk open" aria-label="Excel"><span><svg viewBox="0 0 34 34"><path d="M3 4l3-3h26v32H3z" fill="#d6ecd0" stroke="#1f7a3a" stroke-width="2"/><path d="M6 6l13 20M19 5L6 27" stroke="#2e8b3e" stroke-width="5"/><path d="M18 18l15 5-4 9-13-3z" fill="#fff" stroke="#5a8"/><path d="M18 22l13 3M17 26l12 3" stroke="#6a9"/></svg></span></button>
  <button class="tk open" aria-label="Control panel"><span><svg viewBox="0 0 34 34"><rect x="1" y="4" width="32" height="25" rx="1" fill="#3d9be0" stroke="#2270b0"/><circle cx="9" cy="14" r="5" fill="none" stroke="#fff" stroke-width="2"/><path d="M9 14V8a6 6 0 016 6z" fill="#f7a52b"/><path d="M18 10h10v4H18zM18 17h10v4H18z" fill="#1d66ad" stroke="#cfe8fb"/><circle cx="17" cy="30" r="5" fill="#ddd" stroke="#999"/></svg></span></button>
  <div class="ms-auto d-flex align-items-center tray">
    <button class="kb" aria-label="Keyboard"><svg viewBox="0 0 30 20"><rect x=".5" y=".5" width="29" height="18" rx="1" fill="#f6f3ea" stroke="#4a4030"/><path d="M3 5h24M3 9h24M3 14h4M23 14h4" stroke="#554a38" stroke-width="3" stroke-dasharray="3 1"/><path d="M9 14h12" stroke="#554a38" stroke-width="2"/></svg></button>
    <button><svg viewBox="0 0 20 20"><path d="M1 4h13v12H1z" fill="#1c7fd4"/><path d="M15 6l4-2v12l-4-2z" fill="#1c7fd4"/><text x="7.500" y="14" text-anchor="middle" font-size="11" font-weight="700" font-family="Open Sans" fill="#fff">B</text></svg></button>
    <button aria-label="Volume"><svg viewBox="0 0 20 20"><path d="M2 7h3l5-4v14l-5-4H2z" fill="#fff" stroke="#666"/><path d="M12 7q2 3 0 6M14 5q4 5 0 10M17 4q4 6 0 12" fill="none" stroke="#fff"/></svg></button>
    <button aria-label="Download manager"><svg viewBox="0 0 20 20"><circle cx="12" cy="8" r="7" fill="#2f70c8"/><path d="M7 4q6-4 8 1t-7 5z" fill="#f2c230"/><path d="M1 12h7l1-3 4 5 4 1-8 5-1-3z" fill="#2f9a3a"/><path d="M2 10l4 0 0 3z" fill="#c33"/></svg></button>
    <button aria-label="Wi-Fi"><svg viewBox="0 0 20 20"><path d="M1 7q9-9 18 0l-2 2q-7-7-14 0zM5 11q5-5 10 0l-2 2q-3-3-6 0zM8 14h4l-1 5H9z" fill="#19e019" stroke="#063"/></svg></button>
    <button aria-label="uTorrent"><svg viewBox="0 0 20 20"><circle cx="10" cy="10" r="9" fill="#7bc14d"/><path d="M5 6l3 7q1 2 3 1 2-1 1-3M10 5l3 7q1 3 4 2" fill="none" stroke="#fff" stroke-width="2.200"/></svg></button>
    <button aria-label="Signal"><svg viewBox="0 0 20 20"><path d="M3 16v-2M7 16v-4M11 16V9.500M15 16V7M18.500 16V4" stroke="#fff" stroke-width="2.500"/></svg></button>
    <button aria-label="Graphics"><svg viewBox="0 0 20 20"><rect x="1" y="1" width="18" height="18" rx="2" fill="#2689d8" stroke="#cfe6f8"/><path d="M4 5h5M4 9h5M4 5v4M11 4l5 5M16 4l-5 5M4 13h6v3H4M13 12v4h4" stroke="#fff" fill="none" stroke-width="1.500"/></svg></button>
    <button aria-label="Action center"><svg viewBox="0 0 20 20"><path d="M2.500 2v16" stroke="#fff" stroke-width="2"/><path d="M4 3h13l-2 4 2 5H4z" fill="#fff" stroke="#666"/><circle cx="14" cy="14" r="5" fill="#d9261c"/><path d="M12 12l4 4M16 12l-4 4" stroke="#fff" stroke-width="1.500"/></svg></button>
    <button aria-label="Bluetooth"><svg viewBox="0 0 20 20"><rect x="4" y="1" width="12" height="18" rx="6" fill="#123a80"/><path d="M7 6.500l6 6-3 3.500V4l3 3-6 6" fill="none" stroke="#fff" stroke-width="1.300"/></svg></button>
    <button><svg viewBox="0 0 20 20"><path d="M1 4l9-3 9 3v11l-9 4-9-4z" fill="#c8161d"/><text x="10" y="14" text-anchor="middle" font-size="10" font-weight="700" font-family="Open Sans" fill="#fff">SW</text></svg></button>
    <div class="clock"><div>5:04 PM</div><div>8/13/2020</div></div>
  </div>
</footer>

<script>
// Toolbars: "!" marks a pressed button, "~" mirrors an icon, "^" turns it, "|" is a separator
document.querySelectorAll('[data-icons]').forEach(bar => {
  const vertical = !bar.classList.contains('d-flex');
  bar.innerHTML = bar.dataset.icons.split(' ').map(n => {
    if (n === '|') return vertical ? '<div class="hsep"></div>' : '<i class="vsep"></i>';
    const id = n.replace(/[!~^]/g, '');
    const t = n.includes('~') ? ' style="transform:scaleX(-1)"' : n.includes('^') ? ' style="transform:rotate(-90deg)"' : '';
    return `<button class="ico${n.includes('!') ? ' hot' : ''}" aria-label="${id}"><svg class="i24"${t}><use href="#${id}"/></svg></button>`;
  }).join('');
});
document.querySelectorAll('[data-plain]').forEach(g => {
  g.innerHTML = g.dataset.plain.split(' ').map(n => n === '-' ? '<span></span>' : `<button aria-label="${n}"><svg class="i24"><use href="#${n}"/></svg></button>`).join('');
});
// Tool parameters
const rows = [['id','default tool'],['diameter','2.0'],['feed','400.0'],['shape','10'],['penetration angle','90.0'],['penetration feed','100.0'],['passing feed','800'],['depth step','1.0'],['in trajectotry','(None)'],['out trajectotry','(None)'],['gcode before path','(None)'],['gcode after path','(None)'],['sog','(None)'],['spinlde rpm','(None)'],['CW or CCW','(None)'],['tool change gcode','(None)'],['4th axis meaning','(None)'],['4th axis offset','0.0'],['4th axis scale','1.0'],['fine feed','800']];
document.getElementById('params').innerHTML = rows.map(r => `<tr><th>${r[0]}</th><td>${r[1]}</td></tr>`).join('');
// Palette
const pal = '000000 1a1a1a 333333 4d4d4d 666666 808080 999999 b3b3b3 cccccc e6e6e6 ececec f2f2f2 f9f9f9 ffffff 800000 ff0000 808000 ffff00 008000 00ff00 008080 00ffff 000080 0000ff 800080 ff00ff 2b0000 550000 800000 aa0000 d40000 ff0000 ff2a2a ff5555 ff8080 ffaaaa ffd5d5 280b0b 501616 782121 a02c2c c83737 d35f5f de8787 e9afaf f4d7d7 241c1c 483737 6c5353 916f6f ac9393 c8b7b7 e3dbdb 2b1100 552200 803300 aa4400 d45500 ff6600 ff7f2a ff9955 ffb380 ffccaa ffe6d5 28170b 502d16 784421 a05a2c c87137 d38d5f deaa87 e9c6af f4e3d7 241f1c 483e37 6c5d53 917c6f ac9d93 c8beb7 e3dedb 2b2200 554400 806600 aa8800 d4aa00 ffcc00 ffd42a ffdd55 ffe680 ffeeaa fff6d5 28220b 504416 786721 a0892c c8ab37 d3bc5f decd87 e9ddaf f4eed7 24221c 484537 6c6753 918a6f aca793 c8c4b7 e3e2db 222b00 445500 668000 88aa00 aad400 ccff00 d4ff2a ddff55 e5ff80 eeffaa f6ffd5 23280b 445016 677821 89a02c abc837 bcd35f cdde87 dde9af eef4d7 22241c 454837 676c53 8a916f a7ac93 c4c8b7 e2e3db 112b00 225500'.split(' ');
document.getElementById('pal').insertAdjacentHTML('beforeend', pal.map(c => `<button aria-label="#${c}" style="background:#${c}"></button>`).join(''));
// Rulers, in millimetres at 35% zoom
const mm = 1.323;
function ruler(box, horizontal) {
  const w = box.clientWidth, h = box.clientHeight, len = horizontal ? w - 4 : h;
  let s = '', zero = horizontal ? 754.5 : 632.5;
  for (let v = -700; v <= 700; v += 5) {
    const p = Math.floor(horizontal ? zero + v * mm : zero - v * mm) + .5;
    if (p < 3 || p > len) continue;
    const big = v % 50 === 0, size = big ? 11 : v % 10 === 0 ? 5 : 3;
    s += horizontal ? `<path d="M${p} ${15 - size}V15" stroke="#000"/>` : `<path d="M${16 - size} ${p}H16" stroke="#000"/>`;
    if (!big) continue;
    s += horizontal ? `<text x="${p + 1}" y="10">${v}</text>`
      : String(v).split('').map((d, i) => `<text x="4" y="${p + 8 + i * 8}">${d}</text>`).join('');
  }
  s += horizontal ? `<path d="M3 14.500H${len}" stroke="#000"/><path d="M1117 9h8l-4 6z"/>` : `<path d="M15.500 3V${len}" stroke="#000"/><path d="M11 221v8l5-4z"/>`;
  box.innerHTML = `<svg>${s}</svg>`;
}
ruler(document.getElementById('rh'), true);
ruler(document.getElementById('rv'), false);
// The file name is selected when the dialog opens
const f = document.getElementById('g1'); f.focus(); f.select();
</script>
</body>
</html>
